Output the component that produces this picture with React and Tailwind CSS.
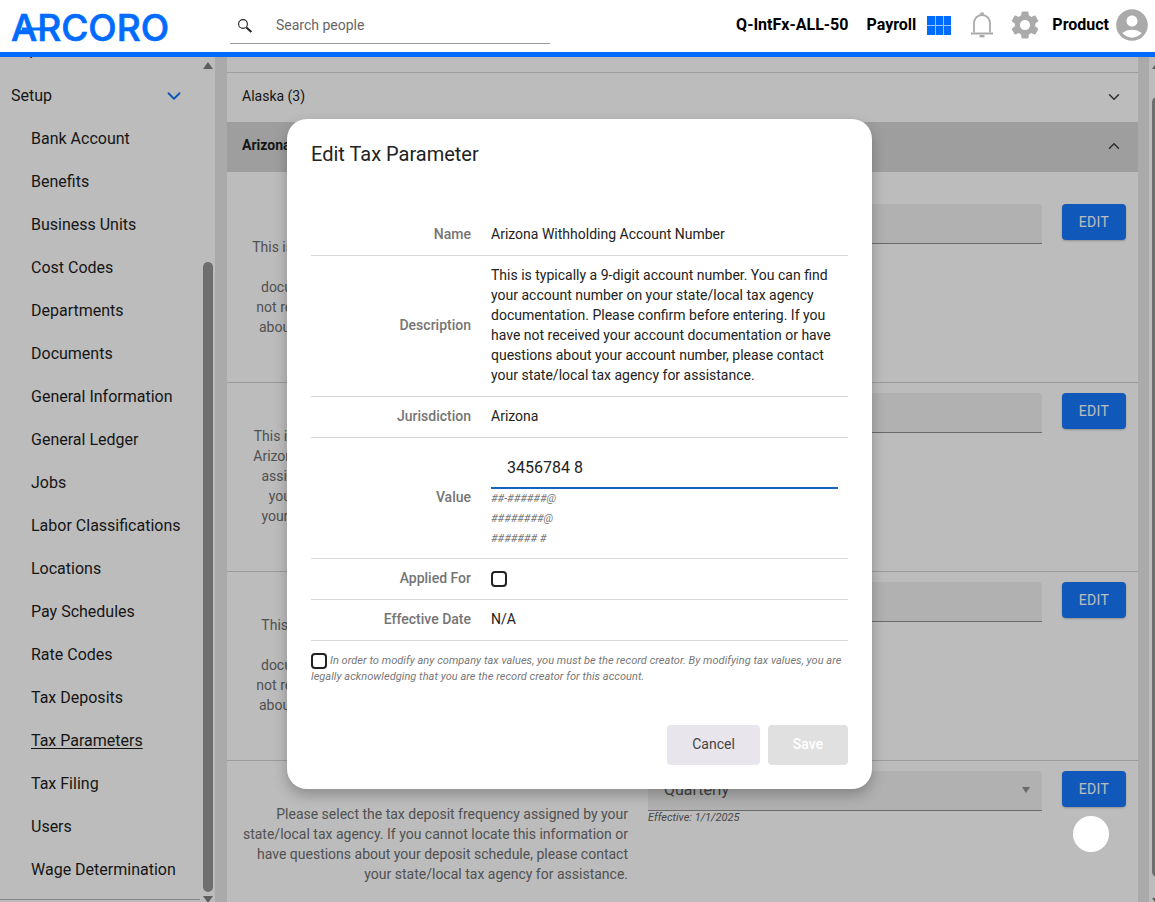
import { ChevronDown, ChevronUp } from "lucide-react";
import { MdAccountCircle, MdSettings } from "react-icons/md";

const setupItems = [
  "Bank Account",
  "Benefits",
  "Business Units",
  "Cost Codes",
  "Departments",
  "Documents",
  "General Information",
  "General Ledger",
  "Jobs",
  "Labor Classifications",
  "Locations",
  "Pay Schedules",
  "Rate Codes",
  "Tax Deposits",
  "Tax Parameters",
  "Tax Filing",
  "Users",
  "Wage Determination",
];

const accountText =
  "This is typically a 9-digit account number. You can find your account number on your state/local tax agency documentation. Please confirm before entering. If you have not received your account documentation or have questions about your account number, please contact your state/local tax agency for assistance.";

const taxRows = [
  {
    title: "Arizona Withholding Account Number",
    lines: [
      "This is generally a 9-digit account number. You may find your",
      "account number on your state/local tax agency",
      "documentation. Please confirm before entering. If you have",
      "not received your account documentation or have questions",
      "about your account number, please contact your state/local",
      "tax agency for assistance.",
    ],
  },
  {
    title: "Arizona Withholding Rate",
    lines: [
      "This is the withholding rate set for your company by the DOR",
      "Arizona Dept. of Revenue. Please confirm the percentage we",
      "assigned before entering. If you have questions about what",
      "you should enter for this account, please contact or reach,",
      "your state/local tax agency for assistance with the account",
    ],
  },
  {
    title: "Arizona Unemployment Account Number",
    lines: [
      "This is typically a 7-digit account number. You may find this",
      "your account number on your state/local tax agency",
      "documentation. Please confirm before entering. If you have",
      "not received your account documentation or have questions",
      "about your account number, please contact your state/local",
      "tax agency for assistance.",
    ],
  },
];

const Logo = () => (
  <svg width="160" height="34" viewBox="0 0 160 34" className="ml-[11px] mt-[6px] overflow-visible">
    <text
      x="0"
      y="29"
      textLength="158"
      lengthAdjust="spacingAndGlyphs"
      fill="#006cff"
      stroke="#006cff"
      strokeWidth="0.7"
      fontFamily="Inter, sans-serif"
      fontWeight="500"
      fontSize="37"
    >
      ARCORO
    </text>
    <path d="M11 17h23" stroke="#006cff" strokeWidth="3" />
  </svg>
);

const SearchGlyph = () => (
  <svg width="16" height="16" viewBox="0 0 16 16" fill="none">
    <circle cx="6" cy="7" r="4.4" stroke="#222" strokeWidth="1.1" />
    <path d="M9.400 10.400l5 4.600" stroke="#222" strokeWidth="2" />
  </svg>
);

const Bell = () => (
  <svg width="24" height="28" viewBox="0 0 24 28" fill="none" stroke="#aaaaaa">
    <path d="M4 21.500V12c0-4.600 3.400-8 8-8s8 3.400 8 8v9.500" strokeWidth="1.800" />
    <path d="M1 22.500h22" strokeWidth="2" />
    <path d="M10.500 3.500c0-2 3-2 3 0" strokeWidth="1.600" />
    <path d="M9.500 25.200h5" strokeWidth="2.400" />
  </svg>
);

const AppsGrid = () => (
  <div className="grid h-[19px] w-[24px] grid-cols-3 gap-px bg-[#99c4ff]">
    {[0, 1, 2, 3, 4, 5].map((cell) => (
      <span key={cell} className="bg-[#006cff]" />
    ))}
  </div>
);

const Header = () => (
  <header className="relative z-30 flex h-[57px] shrink-0 items-start border-b-[5px] border-[#006cff] bg-white">
    <div className="flex h-[52px] w-[230px] shrink-0 items-center">
      <Logo />
    </div>
    <div className="mt-[7px] flex h-[37px] w-[320px] items-center border-b border-[#999999] pl-[7px]">
      <SearchGlyph />
      <span className="ml-[23px] text-sm text-[#666666]">Search people</span>
    </div>
    <div className="ml-auto flex h-[50px] items-center pr-[4px] text-[16px] font-bold text-black">
      <span>Q-IntFx-ALL-50</span>
      <span className="ml-[18px]">Payroll</span>
      <span className="ml-[11px]">
        <AppsGrid />
      </span>
      <span className="ml-[19px]">
        <Bell />
      </span>
      <MdSettings className="ml-[14px] text-[#aaaaaa]" size={34} />
      <span className="ml-[10px]">Product</span>
      <MdAccountCircle className="ml-[4px] text-[#aaaaaa]" size={38} />
    </div>
  </header>
);

const Sidebar = () => (
  <aside className="flex w-[215px] shrink-0 overflow-hidden bg-white">
    <nav className="w-[203px] shrink-0 text-[16px] text-[#111111]">
      <div className="mt-[-29px] flex h-[43px] items-center pl-[11px]">Reports</div>
      <div className="mt-[3px] flex h-[43px] items-center justify-between pl-[11px] pr-[18px]">
        <span>Setup</span>
        <ChevronDown size={22} strokeWidth={2} className="text-[#006cff]" />
      </div>
      {setupItems.map((item) => (
        <div key={item} className="flex h-[43px] items-center whitespace-nowrap pl-[31px]">
          <span className={item === "Tax Parameters" ? "underline underline-offset-2" : ""}>{item}</span>
        </div>
      ))}
      <div className="mt-[8px] w-[200px] border-t border-[#b4b4b4]" />
    </nav>
    <div className="flex w-[10px] shrink-0 flex-col items-center">
      <span className="mt-[5px] h-0 w-0 border-x-[5px] border-b-[7px] border-x-transparent border-b-[#777777]" />
      <span className="mt-[193px] h-[630px] w-[10px] shrink-0 rounded-[5px] bg-[#909090]" />
      <span className="mt-[4px] h-0 w-0 shrink-0 border-x-[5px] border-t-[7px] border-x-transparent border-t-[#777777]" />
    </div>
  </aside>
);

const EditButton = () => (
  <button
    type="button"
    className="h-[36px] w-[64px] shrink-0 rounded-[4px] bg-[#0a72fd] text-sm tracking-[0.4px] text-white shadow-[0_1px_2px_rgba(0,0,0,0.25)]"
  >
    EDIT
  </button>
);

const TaxRow = ({ title, lines, value, effective, first, last }) => (
  <div
    className={`flex px-[12px] ${first ? "h-[211px] pt-[32px]" : "h-[189px] pt-[10px]"} ${
      last ? "" : "border-b border-[#d0d0d0]"
    }`}
  >
    <div className="w-[389px] shrink-0 text-right text-sm leading-5 text-[#666666]">
      <div className="h-[22px] whitespace-nowrap font-medium">{title}</div>
      <div className="mt-[11px] whitespace-nowrap">
        {lines.map((line) => (
          <div key={line}>{line}</div>
        ))}
      </div>
    </div>
    <div className="ml-[20px] w-[394px] shrink-0">
      <div className="flex h-[40px] items-center justify-between rounded-t-[4px] border-b border-[#8a8a8a] bg-[#f0f0f0] pb-[2px] pl-[16px] pr-[12px] text-[16px] text-[#555555]">
        <span>{value}</span>
        {effective && (
          <span className="h-0 w-0 border-x-[4px] border-t-[6px] border-x-transparent border-t-[#8a8a8a]" />
        )}
      </div>
      {effective && <div className="mt-[-1px] text-[11px] italic text-[#555555]">{effective}</div>}
    </div>
    <div className="ml-[20px]">
      <EditButton />
    </div>
  </div>
);

const PageScrollbar = () => (
  <div className="flex w-[6px] shrink-0 flex-col overflow-hidden bg-white pl-[3px]">
    <span className="mt-[5px] h-0 w-0 shrink-0 border-x-[5px] border-b-[7px] border-x-transparent border-b-[#777777]" />
    <span className="mt-[28px] h-[780px] w-[10px] shrink-0 rounded-[5px] bg-[#909090]" />
    <span className="mt-[21px] h-0 w-0 shrink-0 border-x-[5px] border-t-[7px] border-x-transparent border-t-[#777777]" />
  </div>
);

const MainPanel = () => (
  <main className="flex min-w-0 flex-1 bg-[#e6e6e6] pl-[12px]">
    <div className="w-[911px] shrink-0 overflow-hidden bg-white">
      <div className="h-[16px] border-b border-[#d5d5d5]" />
      <div className="flex h-[49px] items-center justify-between pb-[2px] pl-[15px] pr-[15px] text-sm text-[#111111]">
        <span className="mb-[2px]">Alaska (3)</span>
        <ChevronDown size={18} strokeWidth={2} className="text-[#333333]" />
      </div>
      <div className="flex h-[50px] items-center justify-between bg-[#d5d5d5] pb-[2px] pl-[15px] pr-[15px] text-sm font-bold text-[#111111]">
        <span className="mb-[2px]">Arizona (4)</span>
        <ChevronUp size={18} strokeWidth={2} className="text-[#333333]" />
      </div>
      <TaxRow {...taxRows[0]} value="" first />
      <TaxRow {...taxRows[1]} value="" />
      <TaxRow {...taxRows[2]} value="" />
      <TaxRow
        title="Deposit Frequency"
        value="Quarterly"
        effective="Effective: 1/1/2025"
        last
        lines={[
          "Please select the tax deposit frequency assigned by your",
          "state/local tax agency. If you cannot locate this information or",
          "have questions about your deposit schedule, please contact",
          "your state/local tax agency for assistance.",
        ]}
      />
    </div>
    <div className="w-[11px] shrink-0" />
    <PageScrollbar />
  </main>
);

const FormRow = ({ label, children, className = "" }) => (
  <div className={`flex items-center border-b border-[#d8d8d8] pb-[2px] text-sm ${className}`}>
    <div className="w-[160px] shrink-0 text-right font-medium text-[#757575]">{label}</div>
    <div className="ml-[20px] min-w-0 flex-1 text-[#222222]">{children}</div>
  </div>
);

const Checkbox = () => (
  <span className="block h-[16px] w-[16px] shrink-0 rounded-[4px] border-2 border-[#222222] bg-white" />
);

const EditModal = () => (
  <div className="absolute left-[287px] top-[62px] z-20 flex h-[670px] w-[585px] flex-col rounded-[20px] bg-white px-[24px] shadow-[0_6px_14px_rgba(0,0,0,0.25)]">
    <h2 className="mt-[21px] text-[20px] leading-7 text-[#222222]">Edit Tax Parameter</h2>
    <div className="mt-[46px]">
      <FormRow label="Name" className="h-[42px]">
        Arizona Withholding Account Number
      </FormRow>
      <FormRow label="Description" className="h-[141px]">
        <div className="leading-5">{accountText}</div>
      </FormRow>
      <FormRow label="Jurisdiction" className="h-[41px]">
        Arizona
      </FormRow>
      <FormRow label="Value" className="h-[121px]">
        <div className="pr-[10px]">
          <div className="flex h-[44px] items-center border-b-2 border-[#1565c0] pl-[16px] pt-[4px] text-[16px]">
            3456784 8
          </div>
          <div className="text-[11px] italic leading-5 text-[#777777]">
            <div>##-######@</div>
            <div>########@</div>
            <div>####### #</div>
          </div>
        </div>
      </FormRow>
      <FormRow label="Applied For" className="h-[41px]">
        <div className="mt-[2px]">
          <Checkbox />
        </div>
      </FormRow>
      <FormRow label="Effective Date" className="h-[41px]">
        N/A
      </FormRow>
    </div>
    <p className="mt-[12px] text-[11px] italic leading-4 tracking-[0.04px] text-[#777777]">
      <span className="float-left mr-[3px] h-[14px]">
        <Checkbox />
      </span>
      In order to modify any company tax values, you must be the record creator. By modifying tax values, you are
      legally acknowledging that you are the record creator for this account.
    </p>
    <div className="mb-[24px] mt-auto flex justify-end gap-[8px]">
      <button type="button" className="h-[40px] w-[93px] rounded-[4px] bg-[#e9e5ec] pb-[2px] text-sm text-[#444444]">
        Cancel
      </button>
      <button type="button" className="h-[40px] w-[80px] rounded-[4px] bg-[#e0e0e0] pb-[2px] text-sm font-medium text-white">
        Save
      </button>
    </div>
  </div>
);

export default function App() {
  return (
    <div className="flex h-screen flex-col overflow-hidden bg-white font-['Roboto',sans-serif]">
      <Header />
      <div className="relative flex min-h-0 flex-1">
        <Sidebar />
        <MainPanel />
        <div className="absolute inset-0 z-10 bg-[rgba(33,33,33,0.3)]" />
        <EditModal />
        <span className="absolute left-[1073px] top-[759px] z-20 h-[36px] w-[36px] rounded-full bg-white" />
      </div>
    </div>
  );
}
